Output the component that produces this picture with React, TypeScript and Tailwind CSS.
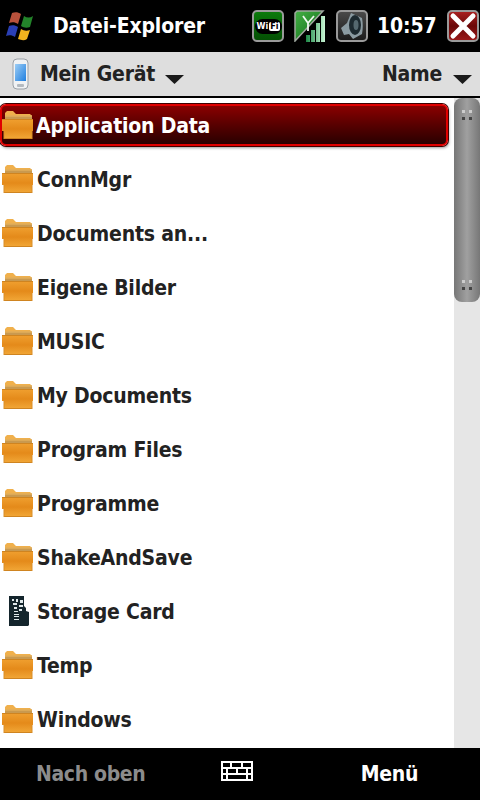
import React from 'react';

const font = { fontFamily: '"DejaVu Sans Condensed", "DejaVu Sans", sans-serif' };

const rows = [
  { name: 'ConnMgr' },
  { name: 'Documents an...' },
  { name: 'Eigene Bilder' },
  { name: 'MUSIC' },
  { name: 'My Documents' },
  { name: 'Program Files' },
  { name: 'Programme' },
  { name: 'ShakeAndSave' },
  { name: 'Storage Card', card: true },
  { name: 'Temp' },
  { name: 'Windows' },
];

function Folder() {
  return (
    <svg width="33" height="28" viewBox="0 0 33 28" className="shrink-0">
      <defs>
        <linearGradient id="fb" x1="0" y1="0" x2="0" y2="1">
          <stop offset="0" stopColor="#f0a030" />
          <stop offset="0.5" stopColor="#e48a1a" />
          <stop offset="1" stopColor="#f2a838" />
        </linearGradient>
      </defs>
      <path d="M4 8V2l2-2h6l3 3h14l2 2v3z" fill="#f0b04c" />
      <path d="M4 4.5h27v3.5H4z" fill="#c9994f" />
      <path d="M4 4.5h27v1H4z" fill="#eeb860" />
      <path d="M1 8h31v12h-1v8H3v-8H1z" fill="url(#fb)" />
      <path d="M1 8.5h31M3 27.5h28" stroke="#cf8420" strokeWidth="1" />
      <path d="M3 20v8M31 20v8" stroke="#d98e28" strokeWidth="1" />
    </svg>
  );
}

function SdCard() {
  return (
    <svg width="22" height="30" viewBox="0 0 22 30" className="shrink-0">
      <path d="M1 0h15v10l2 2v3l3 1v13l-1 1H1z" fill="#14252c" />
      <path d="M4 3h2v2H4zM8 3h2v3H8zM12 4h3v3h-3zM5 7h4v2H5zM11 9h4v2h-4zM6 11h3v2H6zM11 13h3v2h-3zM6 15h4v1H6zM6 18h5v1H6zM6 20h5v1H6zM6 23h5v1H6z" fill="#dfe8ea" />
    </svg>
  );
}

function StatusBadge({ children, className }: { children: React.ReactNode; className: string }) {
  return (
    <div className={`w-[32px] h-[32px] rounded-[5px] border-2 border-[#9a9a9a] overflow-hidden flex items-center justify-center shrink-0 ${className}`}>
      {children}
    </div>
  );
}

function Arrow() {
  return (
    <svg width="19" height="9" viewBox="0 0 19 9">
      <path d="M0 0h19L9.5 9z" fill="#1a1a1a" />
    </svg>
  );
}

export default function App() {
  return (
    <div className="w-[480px] h-[800px] flex flex-col bg-white overflow-hidden" style={font}>
      {/* Title bar */}
      <div className="h-[52px] bg-black flex items-center shrink-0">
        <svg width="32" height="30" viewBox="0 0 32 30" className="ml-[6px] shrink-0">
          <path d="M6 2c3-1 6-1 9 1l-3 10c-3-2-6-2-9-1z" fill="#b8523c" />
          <path d="M18 5c3 2 6 2 9 0l-3 11c-3 1-6 1-9-1z" fill="#23842a" />
          <path d="M3 15c3-1 6-1 9 1l-3 10c-3-2-6-2-9-1z" fill="#2a3fb4" />
          <path d="M15 18c3 2 6 2 9 1l-3 9c-3 2-6 1-9 0z" fill="#f2b41e" />
        </svg>
        <span className="ml-[15px] text-white text-[21px] tracking-[-0.15px] font-bold leading-none">Datei-Explorer</span>
        <div className="ml-auto flex items-center">
          <StatusBadge className="bg-gradient-to-b from-[#0b7a0b] to-[#045004]">
            <div className="w-[27px] h-[15px] rounded-full bg-black flex items-center justify-center gap-[1px] text-white text-[9px] font-bold leading-none">
              <span>Wi</span>
              <span className="bg-white text-black px-[1px] rounded-[2px]">Fi</span>
            </div>
          </StatusBadge>
          <svg width="32" height="32" viewBox="0 0 32 32" className="ml-[10px] shrink-0">
            <defs>
              <linearGradient id="sg" x1="0" y1="0" x2="1" y2="1">
                <stop offset="0" stopColor="#46b046" />
                <stop offset="1" stopColor="#0a6a14" />
              </linearGradient>
              <linearGradient id="bar" x1="0" y1="0" x2="1" y2="0">
                <stop offset="0" stopColor="#1e8a48" />
                <stop offset="1" stopColor="#c8f5d4" />
              </linearGradient>
            </defs>
            <path d="M3 1h26L1 31V3z" fill="url(#sg)" stroke="#a0a8a0" strokeWidth="1.5" />
            <path d="M9 6l5 7 6-7M14 13v8" stroke="#eef8ee" strokeWidth="1.8" fill="none" />
            <path d="M12 25h4v7h-4zM17 20h4v12h-4zM22 13h4v19h-4zM27 6h4v26h-4z" fill="url(#bar)" />
          </svg>
          <StatusBadge className="ml-[10px] bg-gradient-to-b from-[#4a4a4a] to-[#1c1c1c]">
            <svg width="28" height="28" viewBox="0 0 28 28">
              <path d="M13 1l11 5c1 5 1 11 0 16l-9 5-4-5-5 1-3-7 6-5z" fill="#8b9ba2" />
              <ellipse cx="17" cy="13" rx="6" ry="10" fill="#1d2a30" />
              <ellipse cx="18" cy="13" rx="2.5" ry="5" fill="#55686f" />
            </svg>
          </StatusBadge>
          <span className="ml-[9px] w-[59px] text-white text-[21px] tracking-[-0.15px] font-bold leading-none text-center">10:57</span>
          <StatusBadge className="ml-[11px] mr-[1px] bg-gradient-to-b from-[#a82020] via-[#6a0808] to-[#9a1818]">
            <svg width="28" height="28" viewBox="0 0 28 28">
              <path d="M4 4l20 20M24 4L4 24" stroke="#fff" strokeWidth="5" strokeLinecap="round" />
            </svg>
          </StatusBadge>
        </div>
      </div>

      {/* Sort header */}
      <div className="h-[44px] bg-[#dedede] flex items-center shrink-0 text-[#222] text-[21px] tracking-[-0.25px] font-bold leading-none">
        <svg width="18" height="32" viewBox="0 0 18 32" className="ml-[12px] shrink-0">
          <defs>
            <linearGradient id="scr" x1="0" y1="0" x2="1" y2="1">
              <stop offset="0" stopColor="#9ccdf5" />
              <stop offset="1" stopColor="#1f7fe0" />
            </linearGradient>
          </defs>
          <rect x="1" y="1" width="15" height="30" rx="4" fill="#f0f2f4" stroke="#9aa0a6" />
          <rect x="3" y="6" width="11" height="17" fill="url(#scr)" />
          <rect x="5" y="26" width="7" height="3" rx="1" fill="#b4bac0" />
        </svg>
        <span className="ml-[10px]">Mein Gerät</span>
        <span className="ml-[10px] mt-[11px]"><Arrow /></span>
        <span className="ml-auto">Name</span>
        <span className="ml-[11px] mr-[8px] mt-[11px]"><Arrow /></span>
      </div>
      <div className="h-[2px] bg-black shrink-0" />

      {/* List + scrollbar */}
      <div className="flex-1 flex min-h-0">
        <div className="flex-1 min-w-0 text-[#222] text-[21px] tracking-[-0.2px] font-bold leading-none">
          <div className="h-[54px] flex items-center pr-[6px]">
            <div className="w-full h-[42px] rounded-[6px] border-2 border-[#e00000] bg-gradient-to-b from-[#8a0000] to-[#2a0000] flex items-center shadow-[0_0_0_1px_#400000,1px_2px_3px_#0006] text-white">
              <span className="-ml-[1px] mr-[2px] flex"><Folder /></span>
              <span className="pt-[2px]">Application Data</span>
            </div>
          </div>
          {rows.map((row) => (
            <div key={row.name} className="h-[54px] flex items-center pl-[1px]">
              {row.card ? (
                <span className="w-[33px] flex justify-center pl-[2px]"><SdCard /></span>
              ) : (
                <Folder />
              )}
              <span className="ml-[3px] pt-[2px]">{row.name}</span>
            </div>
          ))}
        </div>
        <div className="w-[26px] shrink-0 bg-[#e6e6e6]">
          <div className="h-[204px] rounded-[8px] bg-gradient-to-r from-[#777] via-[#a0a0a0] to-[#777] flex flex-col justify-between items-center py-[12px]">
            {[0, 1].map((i) => (
              <div key={i} className="grid grid-cols-2 gap-[4px]">
                <div className="w-[3px] h-[3px] bg-[#ccc]" />
                <div className="w-[3px] h-[3px] bg-[#ccc]" />
                <div className="w-[3px] h-[3px] bg-[#444]" />
                <div className="w-[3px] h-[3px] bg-[#444]" />
              </div>
            ))}
          </div>
        </div>
      </div>

      {/* Softkey bar */}
      <div className="h-[52px] bg-black flex items-center shrink-0 text-[21px] tracking-[-0.35px] font-bold leading-none">
        <span className="ml-[36px] text-[#8c8c8c]">Nach oben</span>
        <svg width="32" height="20" viewBox="0 0 32 20" className="ml-[76px] -mt-[6px] shrink-0">
          <path d="M1 1h30v18H1zM1 7h30M1 13h30M10 1v6M21 1v6M6 7v6M16 7v6M26 7v6M6 13v6M26 13v6" stroke="#fff" strokeWidth="2" fill="none" />
        </svg>
        <span className="ml-auto mr-[62px] text-white">Menü</span>
      </div>
    </div>
  );
}
